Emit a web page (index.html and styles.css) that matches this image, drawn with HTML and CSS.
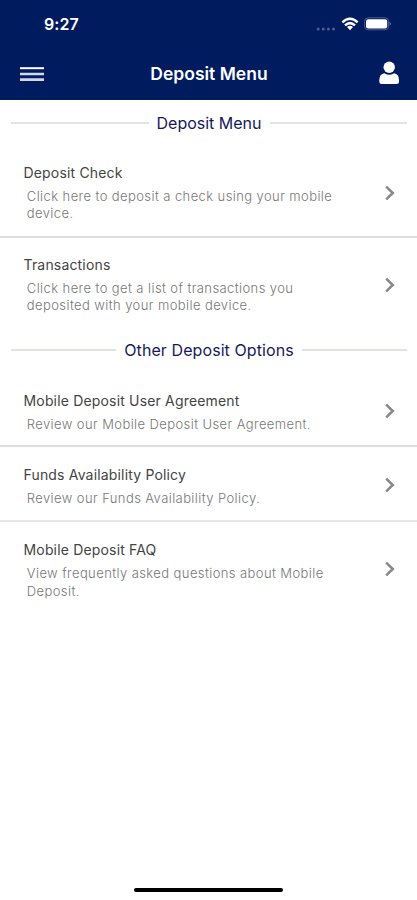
FILE: index.html
```html
<!DOCTYPE html>
<html lang="en">
<head>
<meta charset="utf-8">
<title>Deposit Menu</title>
<link rel="stylesheet" href="styles.css">
</head>
<body>
<div class="screen">
  <header class="header">
    <div class="status">
      <span class="time">9:27</span>
      <div class="indicators">
        <svg class="dots" width="20" height="4" viewBox="0 0 20 4"><circle cx="2.2" cy="2" r="1.5"/><circle cx="7.3" cy="2" r="1.5"/><circle cx="12.4" cy="2" r="1.5"/><circle cx="17.5" cy="2" r="1.5"/></svg>
        <svg class="wifi" width="18" height="14" viewBox="0 0 18 14"><g fill="none" stroke="#fff" stroke-width="2.5"><path d="M1.3 5.4Q9-1.8 16.7 5.4"/><path d="M4 8.4Q9 3.9 14 8.4"/></g><path fill="#fff" d="M6 10Q9 7.5 12 10L9 13.2Z"/></svg>
        <svg class="battery" width="28" height="14" viewBox="0 0 28 14"><rect x=".6" y=".8" width="24" height="12" rx="3.6" fill="none" stroke="#4d5f91"/><rect x="2" y="2.2" width="21.2" height="9.2" rx="2.2" fill="#fff"/><path fill="#8a94b8" d="M25.6 4.8q2 2 0 4z"/></svg>
      </div>
    </div>
    <nav class="bar">
      <svg class="menu" width="24" height="16" viewBox="0 0 24 16"><path stroke="#fff" stroke-width="2" d="M0 2.2H24"/><path stroke="#d3d7e5" stroke-width="2.7" d="M0 8H24M0 13.7H24"/></svg>
      <h1 class="title">Deposit Menu</h1>
      <svg class="user" width="20" height="24" viewBox="0 0 20 24" fill="#fff"><circle cx="10.2" cy="6.3" r="5.7"/><path d="M5.5 12.2Q10 15.2 15 12.2Q20 13 20 19V20.5Q20 23 17.5 23H2.8Q.3 23 .3 20.5V19Q.3 13 5.5 12.2Z"/></svg>
    </nav>
  </header>
  <main class="content">
    <h2 class="section"><span>Deposit Menu</span></h2>
    <a class="item"><div class="text"><div class="name">Deposit Check</div><div class="desc">Click here to deposit a check using your mobile<br>device.</div></div><svg class="chevron" width="10" height="16" viewBox="0 0 10 16"><path d="M1.2 1.7L7.8 8L1.2 14.3"/></svg></a>
    <a class="item last"><div class="text"><div class="name">Transactions</div><div class="desc">Click here to get a list of transactions you<br>deposited with your mobile device.</div></div><svg class="chevron" width="10" height="16" viewBox="0 0 10 16"><path d="M1.2 1.7L7.8 8L1.2 14.3"/></svg></a>
    <h2 class="section second"><span>Other Deposit Options</span></h2>
    <a class="item option"><div class="text"><div class="name">Mobile Deposit User Agreement</div><div class="desc">Review our Mobile Deposit User Agreement.</div></div><svg class="chevron" width="10" height="16" viewBox="0 0 10 16"><path d="M1.2 1.7L7.8 8L1.2 14.3"/></svg></a>
    <a class="item option light"><div class="text"><div class="name">Funds Availability Policy</div><div class="desc">Review our Funds Availability Policy.</div></div><svg class="chevron" width="10" height="16" viewBox="0 0 10 16"><path d="M1.2 1.7L7.8 8L1.2 14.3"/></svg></a>
    <a class="item option last"><div class="text"><div class="name">Mobile Deposit FAQ</div><div class="desc">View frequently asked questions about Mobile<br>Deposit.</div></div><svg class="chevron" width="10" height="16" viewBox="0 0 10 16"><path d="M1.2 1.7L7.8 8L1.2 14.3"/></svg></a>
  </main>
  <div class="home"></div>
</div>
</body>
</html>
```
FILE: styles.css
```css
* { box-sizing: border-box; }
body { margin: 0; background: #fff; font-family: Inter, "Liberation Sans", sans-serif; }
.screen { height: 900px; display: flex; flex-direction: column; overflow: hidden; }
.header { flex: none; height: 100px; background: #001b5e; color: #fff; }
.status { height: 48px; padding: 0 26px 0 44px; display: flex; align-items: center; justify-content: space-between; }
.time { font-size: 16px; font-weight: 600; letter-spacing: .1px; }
.indicators { display: flex; align-items: center; }
.dots { fill: #4d5f91; margin: 9px 5px 0 0; }
.wifi { margin-right: 5px; }
.battery { margin-right: -1px; }
.bar { height: 52px; padding: 0 18px 0 20px; display: grid; grid-template-columns: 24px 1fr 20px; align-items: center; }
.title { margin: 0; padding: 0 5px 2px 0; font-size: 17.5px; font-weight: 600; text-align: center; }
.user { margin-top: -2px; }
.content { flex: 1; }
.section { margin: 0; height: 45.6px; padding: 1px 10px 0 11px; display: flex; align-items: center; gap: 8px; font-size: 16px; font-weight: 400; color: #17195c; white-space: nowrap; }
.section.second { height: 45px; padding-top: 0; letter-spacing: .08px; }
.section::before, .section::after { content: ""; flex: 1; height: 2.4px; background: #e2e3e6; }
.item { display: flex; align-items: center; justify-content: space-between; padding: 17.3px 22px 12.8px 23.5px; border-bottom: 2px solid #dedede; }
.item.option { padding-top: 18.1px; padding-bottom: 12px; }
.item.light { border-color: #e8e8e8; }
.item.last { border-bottom: 0; }
.name { height: 20px; line-height: 20px; font-size: 14px; letter-spacing: .17px; color: #444; }
.desc { margin: 5px 0 0 3.3px; font-size: 13px; line-height: 17.5px; letter-spacing: .41px; font-weight: 300; color: #777; white-space: nowrap; }
.chevron { fill: none; stroke: #888; stroke-width: 2.5; flex: none; }
.option .chevron { margin-top: -3px; }
.home { width: 149px; height: 4px; margin: 0 auto 8px; border-radius: 2px; background: #000; }
```
